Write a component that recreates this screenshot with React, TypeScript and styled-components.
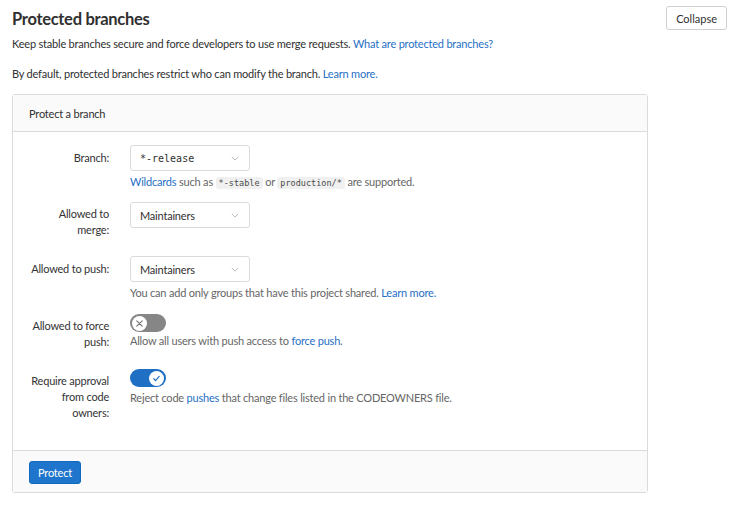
import React, { useState } from 'react';
import styled, { createGlobalStyle } from 'styled-components';

const GlobalStyle = createGlobalStyle`
  body {
    margin: 0;
    background: #fff;
    font-family: Lato, 'Noto Sans', sans-serif;
    color: #303030;
    letter-spacing: -0.2px;
  }
`;

const App: React.FC = () => {
  const [forcePush, setForcePush] = useState(false);
  const [codeOwners, setCodeOwners] = useState(true);

  return (
    <Page>
      <GlobalStyle />
      <SectionHeader>
        <Title>Protected branches</Title>
        <CollapseButton>Collapse</CollapseButton>
      </SectionHeader>
      <Intro>
        Keep stable branches secure and force developers to use merge requests.{' '}
        <Link href="#">What are protected branches?</Link>
      </Intro>
      <Intro $top={14}>
        By default, protected branches restrict who can modify the branch. <Link href="#">Learn more.</Link>
      </Intro>

      <Card>
        <CardHeader>Protect a branch</CardHeader>
        <CardBody>
          <FormRow $gap={12}>
            <Label $top={5}>Branch:</Label>
            <Field>
              <Select $mono>
                *-release
                <Chevron />
              </Select>
              <Help>
                <Link href="#">Wildcards</Link> such as <Code>*-stable</Code> or <Code>production/*</Code> are supported.
              </Help>
            </Field>
          </FormRow>

          <FormRow $gap={18}>
            <Label $top={4}>Allowed to merge:</Label>
            <Field>
              <Select>
                Maintainers
                <Chevron />
              </Select>
            </Field>
          </FormRow>

          <FormRow $gap={13}>
            <Label $top={5}>Allowed to push:</Label>
            <Field>
              <Select>
                Maintainers
                <Chevron />
              </Select>
              <Help>
                You can add only groups that have this project shared. <Link href="#">Learn more.</Link>
              </Help>
            </Field>
          </FormRow>

          <FormRow $gap={19}>
            <Label $top={4}>Allowed to force push:</Label>
            <Field>
              <Toggle $on={forcePush} onClick={() => setForcePush(!forcePush)}>
                <Knob $on={forcePush}>
                  {forcePush ? <CheckIcon /> : <CrossIcon />}
                </Knob>
              </Toggle>
              <Help $top={1}>
                Allow all users with push access to <Link href="#">force push</Link>.
              </Help>
            </Field>
          </FormRow>

          <FormRow $gap={0}>
            <Label $top={4}>Require approval from code owners:</Label>
            <Field>
              <Toggle $on={codeOwners} onClick={() => setCodeOwners(!codeOwners)}>
                <Knob $on={codeOwners}>
                  {codeOwners ? <CheckIcon /> : <CrossIcon />}
                </Knob>
              </Toggle>
              <Help $top={3}>
                Reject code <Link href="#">pushes</Link> that change files listed in the CODEOWNERS file.
              </Help>
            </Field>
          </FormRow>
        </CardBody>
        <CardFooter>
          <PrimaryButton>Protect</PrimaryButton>
        </CardFooter>
      </Card>
    </Page>
  );
};

const Chevron = () => (
  <ChevronSvg viewBox="0 0 10 6" width="8" height="5">
    <path d="M1 1l4 4 4-4" fill="none" stroke="#aaa" strokeWidth="1" />
  </ChevronSvg>
);

const CrossIcon = () => (
  <svg viewBox="0 0 10 10" width="9" height="9">
    <path d="M2 2l6 6M8 2l-6 6" stroke="#777" strokeWidth="1.3" strokeLinecap="round" />
  </svg>
);

const CheckIcon = () => (
  <svg viewBox="0 0 10 10" width="9" height="9">
    <path d="M2 5.3l2 2 4-4.6" fill="none" stroke="#1f6fc5" strokeWidth="1.3" strokeLinecap="round" strokeLinejoin="round" />
  </svg>
);

const Page = styled.div`
  width: 715px;
  padding: 6px 9px 0 12px;
  font-size: 11px;
`;

const SectionHeader = styled.div`
  display: flex;
  justify-content: space-between;
  align-items: flex-start;
`;

const Title = styled.h4`
  margin: 2px 0 0;
  font-size: 16.5px;
  font-weight: 700;
  line-height: 22px;
  letter-spacing: -0.3px;
  color: #303030;
`;

const CollapseButton = styled.button`
  height: 24px;
  padding: 0 9px;
  border: 1px solid #d0d0d0;
  border-radius: 3px;
  background: #fff;
  font-family: inherit;
  font-size: 11px;
  color: #303030;
`;

const Intro = styled.p<{ $top?: number }>`
  margin: ${p => p.$top ?? 6}px 0 0;
  line-height: 16px;
  color: #303030;
`;

const Link = styled.a`
  color: #1f6fc5;
  text-decoration: none;
`;

const Card = styled.div`
  margin-top: 12px;
  width: 634px;
  border: 1px solid #dbdbdb;
  border-radius: 3px;
  background: #fff;
`;

const CardHeader = styled.div`
  height: 36px;
  display: flex;
  align-items: center;
  padding: 0 16px;
  background: #fafafa;
  border-bottom: 1px solid #dbdbdb;
  color: #303030;
`;

const CardBody = styled.div`
  padding: 13px 16px 29px;
`;

const FormRow = styled.div<{ $gap: number }>`
  display: grid;
  grid-template-columns: 80px 1fr;
  column-gap: 21px;
  margin-bottom: ${p => p.$gap}px;
`;

const Label = styled.label<{ $top: number }>`
  padding-top: ${p => p.$top}px;
  text-align: right;
  line-height: 16px;
  color: #333;
`;

const Field = styled.div`
  display: flex;
  flex-direction: column;
  align-items: flex-start;
`;

const Select = styled.div<{ $mono?: boolean }>`
  position: relative;
  box-sizing: border-box;
  width: 120px;
  height: 26px;
  display: flex;
  align-items: center;
  padding: 0 9px;
  border: 1px solid #dbdbdb;
  border-radius: 3px;
  background: #fff;
  color: #303030;
  font-family: ${p => (p.$mono ? "'DejaVu Sans Mono', 'Liberation Mono', monospace" : 'inherit')};
  font-size: ${p => (p.$mono ? '10px' : '11px')};
  letter-spacing: ${p => (p.$mono ? '0' : 'inherit')};
`;

const ChevronSvg = styled.svg`
  position: absolute;
  right: 10px;
  top: 10px;
`;

const Help = styled.div<{ $top?: number }>`
  margin-top: ${p => p.$top ?? 3}px;
  line-height: 16px;
  height: 16px;
  color: #666;
`;

const Code = styled.code`
  padding: 1px 3px;
  border-radius: 3px;
  background: #f0f0f0;
  color: #4a4a4a;
  font-family: 'DejaVu Sans Mono', 'Liberation Mono', monospace;
  font-size: 8.5px;
  letter-spacing: 0;
  line-height: 12px;
`;

const Toggle = styled.button<{ $on: boolean }>`
  width: 36px;
  height: 18px;
  padding: 0 2px;
  border: none;
  border-radius: 9px;
  background: ${p => (p.$on ? '#1f6fc5' : '#868686')};
  display: flex;
  align-items: center;
  justify-content: ${p => (p.$on ? 'flex-end' : 'flex-start')};
  cursor: pointer;
`;

const Knob = styled.span<{ $on: boolean }>`
  width: 15px;
  height: 15px;
  border-radius: 50%;
  background: #fff;
  display: flex;
  align-items: center;
  justify-content: center;
`;

const CardFooter = styled.div`
  padding: 10px 16px 8px;
  background: #fafafa;
  border-top: 1px solid #dbdbdb;
`;

const PrimaryButton = styled.button`
  height: 23px;
  padding: 0 8px;
  border: 1px solid #1068bf;
  border-radius: 3px;
  background: #1f75cb;
  color: #fff;
  font-family: inherit;
  font-size: 11px;
  letter-spacing: inherit;
`;

export default App;
